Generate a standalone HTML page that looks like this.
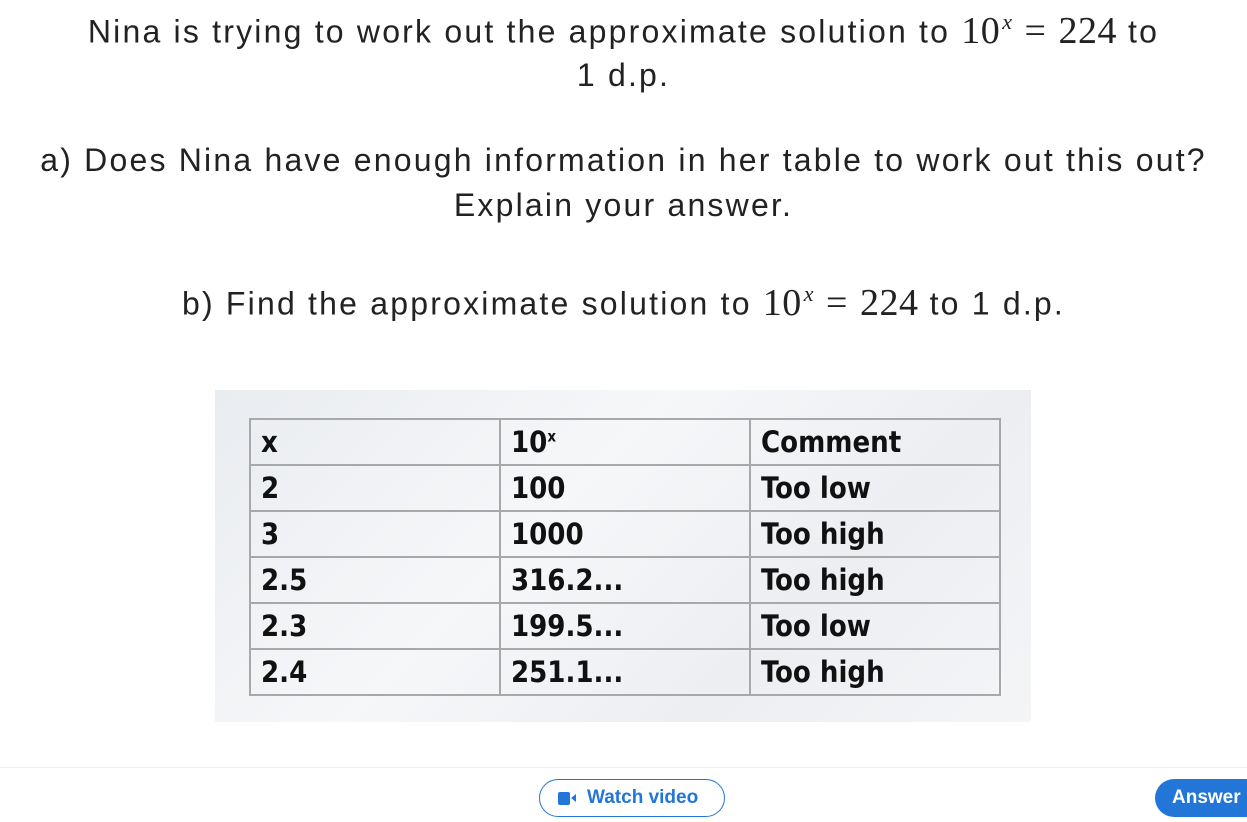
<!DOCTYPE html>
<html><head><style>
body{margin:0;width:1247px;height:822px;background:#fff;font-family:"Liberation Sans",sans-serif;color:#222;position:relative;overflow:hidden}
.t{position:absolute;left:0;width:1247px;text-align:center;font-size:32px;line-height:40px;letter-spacing:2.2px;white-space:nowrap}
.m{font-family:"Liberation Serif",serif;font-size:38px;letter-spacing:0.5px}
.m sup{font-style:italic;font-size:22px;margin-left:2px}
.m i{font-style:normal;margin:0 12px}
.img{position:absolute;left:215px;top:390px;width:816px;height:332px;background:linear-gradient(135deg,#e9ecf0,#f6f7f9 40%,#eceef2 70%,#f4f5f7)}
table{position:absolute;left:34px;top:28px;border-collapse:collapse;table-layout:fixed;font-family:"DejaVu Sans Condensed","DejaVu Sans",sans-serif;font-weight:bold;font-size:29px;color:#111}
td{border:2px solid #a8a8a8;width:250px;height:46px;padding:0 0 0 10px;box-sizing:border-box}
.hr{position:absolute;left:0;top:767px;width:1247px;height:1px;background:#eceef4}
.wv{position:absolute;left:539px;top:779px;width:184px;height:36px;border:1px solid #2276d8;border-radius:20px;color:#2276d8;font-weight:bold;font-size:19px;line-height:36px}
.wv span{position:absolute;left:47px}
.ic{position:absolute;left:18px;top:12px;width:12px;height:13px;background:#2276d8;border-radius:2px}
.ic2{position:absolute;left:31px;top:14px;width:0;height:0;border-top:4px solid transparent;border-bottom:4px solid transparent;border-right:5px solid #2276d8}
.an{position:absolute;left:1155px;top:779px;width:110px;height:38px;border-radius:20px;background:#2276d8;color:#fff;font-weight:bold;font-size:19px;line-height:38px;padding-left:17px;box-sizing:border-box}
</style></head><body>
<div class="t" style="top:2px">Nina is trying to work out the approximate solution to <span class="m">10<sup>x</sup><i>=</i>224</span> to</div>
<div class="t" style="top:55px">1 d.p.</div>
<div class="t" style="top:140px">a) Does Nina have enough information in her table to work out this out?</div>
<div class="t" style="top:185px">Explain your answer.</div>
<div class="t" style="top:274px">b) Find the approximate solution to <span class="m">10<sup>x</sup><i>=</i>224</span> to 1 d.p.</div>
<div class="img"><table>
<tr><td>x</td><td>10<sup style="font-size:15px">x</sup></td><td>Comment</td></tr>
<tr><td>2</td><td>100</td><td>Too low</td></tr>
<tr><td>3</td><td>1000</td><td>Too high</td></tr>
<tr><td>2.5</td><td>316.2...</td><td>Too high</td></tr>
<tr><td>2.3</td><td>199.5...</td><td>Too low</td></tr>
<tr><td>2.4</td><td>251.1...</td><td>Too high</td></tr>
</table></div>
<div class="hr"></div>
<div class="wv"><div class="ic"></div><div class="ic2"></div><span>Watch video</span></div>
<div class="an">Answer</div>
</body></html>
